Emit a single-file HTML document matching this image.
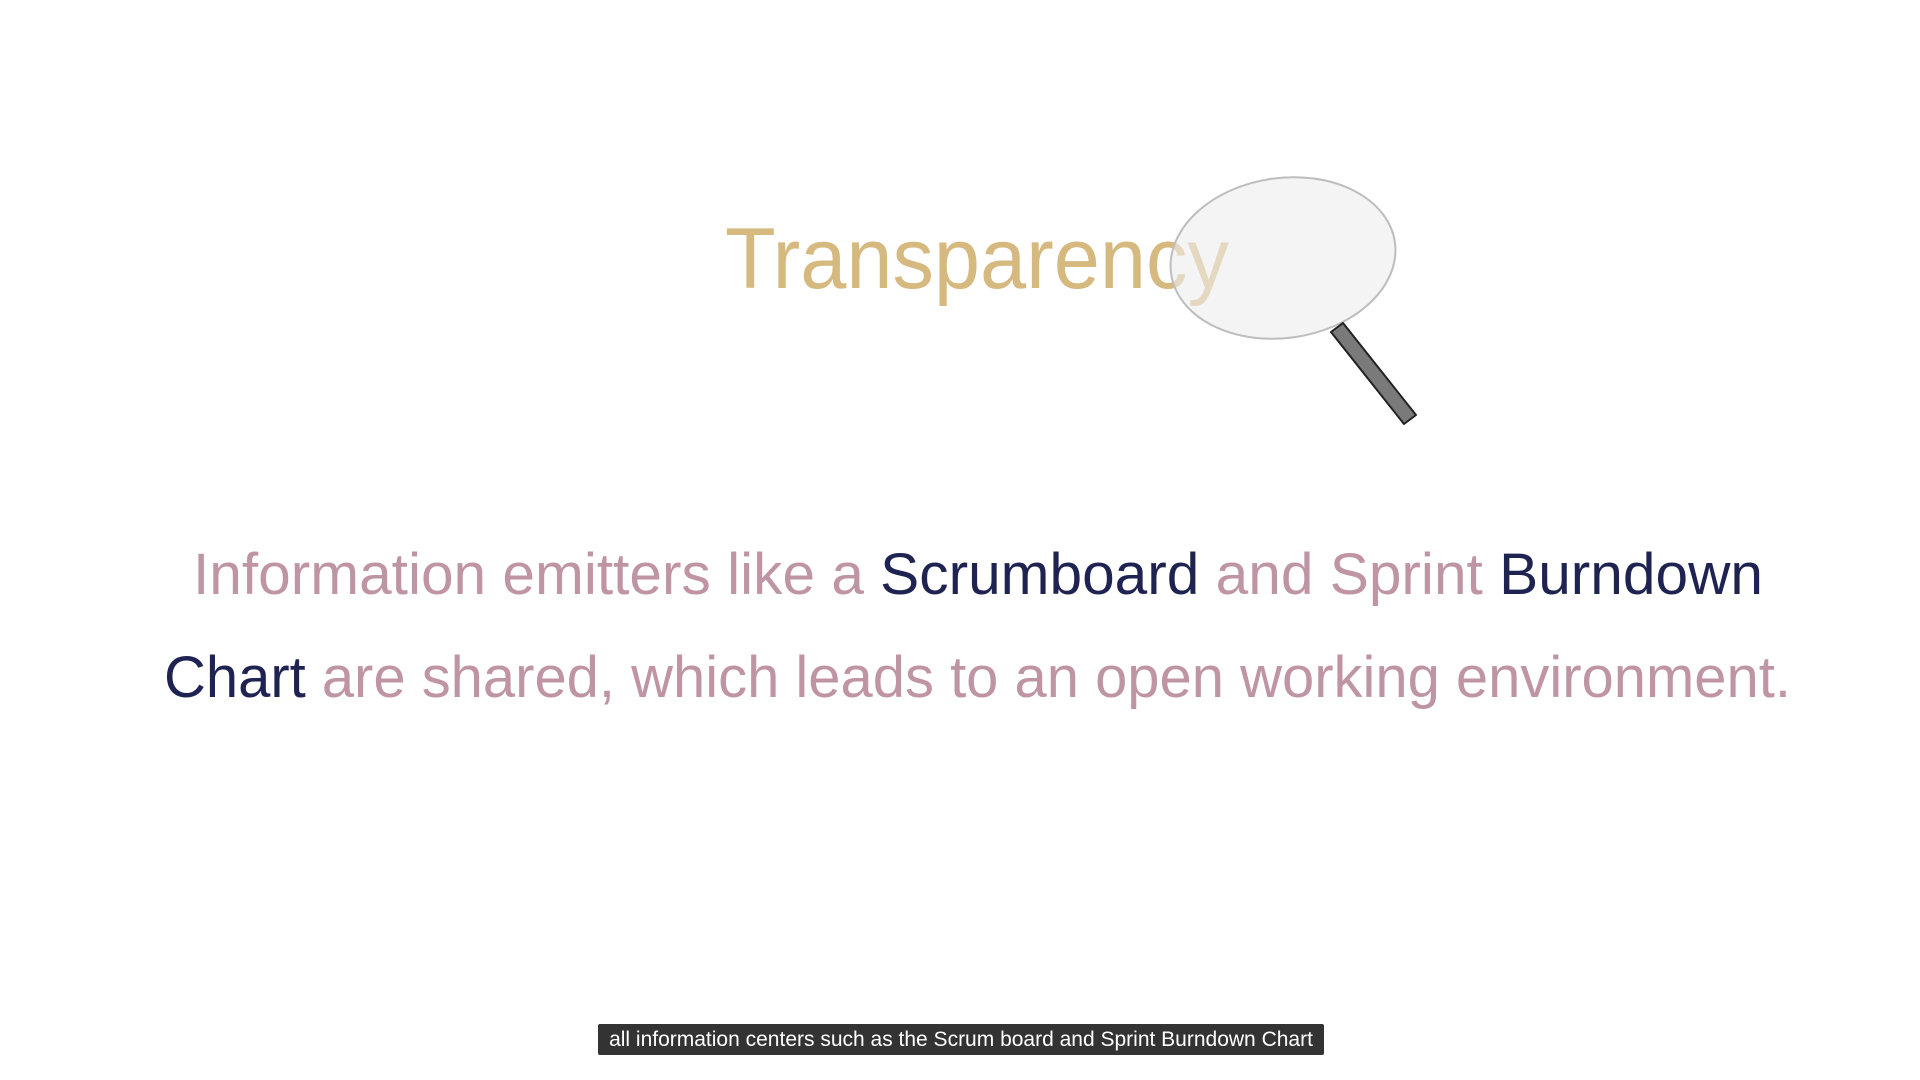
<!DOCTYPE html>
<html><head><meta charset="utf-8"><style>
html,body{margin:0;padding:0;background:#fff;width:1920px;height:1080px;overflow:hidden}
svg{position:absolute;left:0;top:0}
.cap{position:absolute;left:598px;top:1024px;width:726px;height:31px;background:#333;color:#fff;font:21px "Liberation Sans",sans-serif;line-height:31px;text-align:center;border-radius:2px;white-space:nowrap}
</style></head><body>
<svg width="1920" height="1080" viewBox="0 0 1920 1080">
<text x="725" y="288" font-family="Liberation Sans, sans-serif" font-size="86" fill="#d6b97f" textLength="504" lengthAdjust="spacingAndGlyphs">Transparency</text>
<ellipse cx="1283" cy="258" rx="113" ry="80" transform="rotate(-8 1283 258)" fill="#ececec" fill-opacity="0.6" stroke="#bdbdbd" stroke-width="2"/>
<polygon points="1331,332 1343,323 1416,415 1404,424" fill="#7a7a7a" stroke="#222" stroke-width="2" stroke-linejoin="round"/>
<text x="193" y="594" font-family="Liberation Sans, sans-serif" font-size="58" fill="#bf95a4" textLength="1570" lengthAdjust="spacingAndGlyphs">Information emitters like a <tspan fill="#1f2352">Scrumboard</tspan> and Sprint <tspan fill="#1f2352">Burndown</tspan></text>
<text x="164" y="697" font-family="Liberation Sans, sans-serif" font-size="58" fill="#bf95a4" textLength="1627" lengthAdjust="spacingAndGlyphs"><tspan fill="#1f2352">Chart</tspan> are shared, which leads to an open working environment.</text>
</svg>
<div class="cap">all information centers such as the Scrum board and Sprint Burndown Chart</div>
</body></html>
